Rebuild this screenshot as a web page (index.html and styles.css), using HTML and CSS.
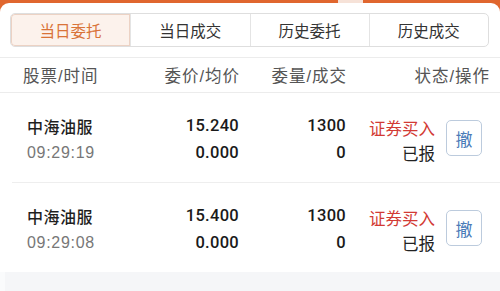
FILE: index.html
```html
<!DOCTYPE html>
<html lang="zh-CN">
<head>
<meta charset="utf-8">
<title>当日委托</title>
<link rel="stylesheet" href="styles.css">
</head>
<body>
<div class="page">
  <span class="notch"></span>
  <div class="panel">
    <div class="tabs-wrap">
      <div class="tabs">
        <div class="tab active">当日委托</div>
        <div class="tab">当日成交</div>
        <div class="tab">历史委托</div>
        <div class="tab">历史成交</div>
      </div>
    </div>
    <div class="head grid">
      <div class="c1">股票/时间</div>
      <div class="c2">委价/均价</div>
      <div class="c3">委量/成交</div>
      <div class="c4">状态/操作</div>
    </div>
    <div class="order grid">
      <div class="c1 cell">
        <span class="name">中海油服</span>
        <span class="time">09:29:19</span>
      </div>
      <div class="c2 cell num">
        <span>15.240</span>
        <span>0.000</span>
      </div>
      <div class="c3 cell num">
        <span>1300</span>
        <span>0</span>
      </div>
      <div class="c4 act">
        <div class="cell status">
          <span class="buy">证券买入</span>
          <span>已报</span>
        </div>
        <button class="cancel">撤</button>
      </div>
    </div>
    <div class="order grid last">
      <div class="c1 cell">
        <span class="name">中海油服</span>
        <span class="time">09:29:08</span>
      </div>
      <div class="c2 cell num">
        <span>15.400</span>
        <span>0.000</span>
      </div>
      <div class="c3 cell num">
        <span>1300</span>
        <span>0</span>
      </div>
      <div class="c4 act">
        <div class="cell status">
          <span class="buy">证券买入</span>
          <span>已报</span>
        </div>
        <button class="cancel">撤</button>
      </div>
    </div>
  </div>
  <div class="footer"></div>
</div>
</body>
</html>
```
FILE: styles.css
```css
* { box-sizing: border-box; }
html, body { margin: 0; padding: 0; }
body {
  width: 500px;
  height: 291px;
  overflow: hidden;
  background: #e0662e;
  font-family: "Liberation Sans", "Noto Sans CJK SC", sans-serif;
  color: #222;
}
.page {
  position: relative;
  padding-top: 3px;
  height: 291px;
  display: flex;
  flex-direction: column;
}
.notch {
  position: absolute;
  left: 338px;
  top: 0;
  width: 25px;
  height: 3px;
  background: #f6e2d8;
}
.panel {
  background: #fff;
  border-radius: 9px 9px 0 0;
}
.tabs-wrap {
  padding: 10px 11px 10px 10px;
}
.tabs {
  display: grid;
  grid-template-columns: repeat(4, 1fr);
  height: 34px;
  border: 1px solid #dedede;
  border-radius: 5px;
  overflow: hidden;
}
.tab {
  display: flex;
  align-items: center;
  justify-content: center;
  font-size: 15.5px;
  color: #333;
  border-left: 1px solid #e4e4e4;
}
.tab:first-child { border-left: none; }
.tab.active {
  background: #fcf2ec;
  color: #d97338;
  box-shadow: inset 0 0 0 1px #ecd2c4;
  border-radius: 4px 0 0 4px;
}
.grid {
  display: grid;
  grid-template-columns: 137px 79px 107px 1fr;
  padding-right: 11px;
}
.head {
  height: 36px;
  border-top: 1px solid #ececec;
  border-bottom: 1px solid #ececec;
  align-items: center;
  padding-left: 23px;
  font-size: 16.5px;
  color: #555;
  letter-spacing: 1px;
}
.head .c2, .head .c3, .head .c4 { margin-right: -1px; }
.c2, .c3, .c4 { text-align: right; }
.order {
  margin-left: 12px;
  padding-left: 11px;
  height: 90px;
  border-bottom: 1px solid #eeeeee;
  padding-top: 20px;
}
.order.last { height: 89px; border-bottom: none; }
.cell {
  display: flex;
  flex-direction: column;
  gap: 1px;
  font-size: 16px;
  line-height: 26px;
}
.c1.cell { padding-left: 4px; }
.num {
  align-items: flex-end;
  font-family: "Roboto", "Liberation Sans", sans-serif;
  font-weight: 500;
  font-size: 16.5px;
  letter-spacing: 0.3px;
  color: #1a1a1a;
}
.name { font-family: "Noto Sans CJK SC", sans-serif; font-weight: 500; letter-spacing: 0.5px; color: #1f1f1f; }
.time { color: #777; letter-spacing: 0.7px; }
.act {
  display: flex;
  justify-content: flex-end;
  align-items: flex-start;
  gap: 11px;
  padding-right: 7px;
}
.status { align-items: flex-end; font-size: 16.5px; font-family: "Noto Sans CJK SC", sans-serif; }
.buy { color: #d23a34; position: relative; top: 2px; }
.cancel {
  margin-top: 7px;
  width: 36px;
  height: 36px;
  padding: 0;
  border: 1px solid #bccbdd;
  border-radius: 5px;
  background: #fff;
  color: #4a7bb8;
  font-family: "Noto Sans CJK SC", sans-serif;
  font-size: 17px;
}
.footer {
  flex: 1;
  background: #f5f6f8;
  border-left: 5px solid #fafbfc;
}
```
